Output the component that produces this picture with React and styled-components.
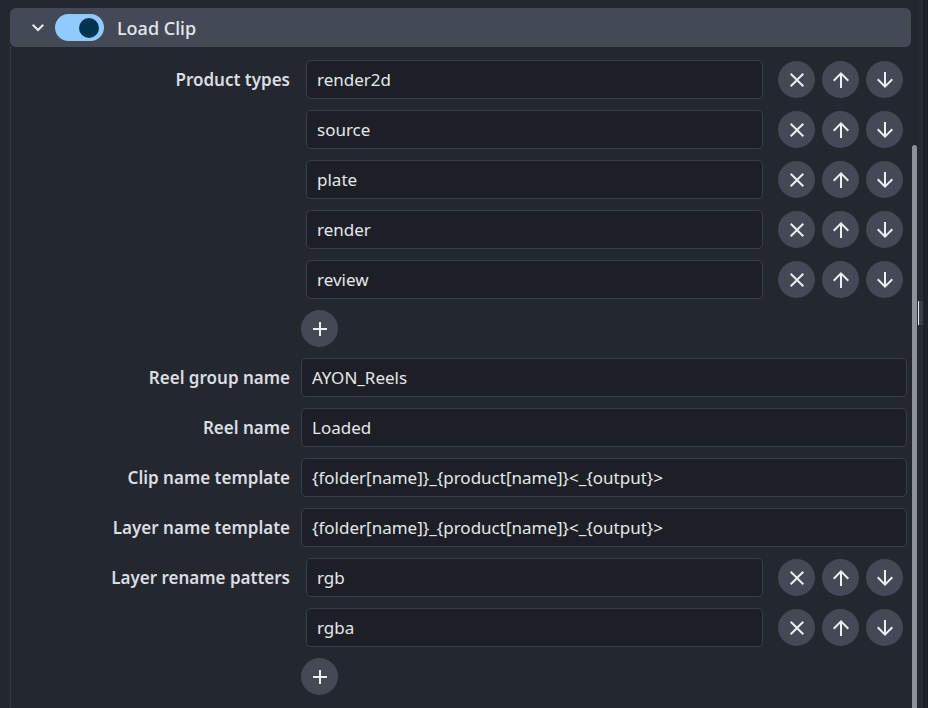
import React from "react";
import styled, { createGlobalStyle } from "styled-components";

const GlobalStyle = createGlobalStyle`
  html, body { margin: 0; padding: 0; background: #23272e; }
  body { font-family: "Noto Sans", "Open Sans", sans-serif; overflow: hidden; }
  * { box-sizing: border-box; }
`;

const Page = styled.div`
  display: flex;
  height: 708px;
  width: 928px;
  background: #23272e;
  overflow: hidden;
`;

const ScrollArea = styled.div`
  flex: 1;
  min-width: 0;
  padding: 8px 0 0 10px;
  overflow: hidden;
`;

const ScrollTrack = styled.div`
  width: 7px;
  display: flex;
  flex-direction: column;
  padding: 145px 1px 0 1px;
  background: #22262d;
`;

const ScrollThumb = styled.div`
  flex: 1;
  background: #8c919a;
  border-radius: 3px 3px 0 0;
`;

const SideStrip = styled.div`
  width: 10px;
  display: flex;
  flex-direction: column;
  padding-top: 301px;
  background: linear-gradient(to right, #262a31 0 5px, #1e2128 5px 10px);
`;

const SplitHandle = styled.div`
  width: 5px;
  height: 24px;
  background: #3a3e45;
  border-left: 1.5px solid #e8eaee;
`;

const Header = styled.div`
  display: flex;
  align-items: center;
  height: 39px;
  background: #434a56;
  border-radius: 6px;
  padding-left: 16px;
  gap: 5px;
`;

const Chevron = styled.svg`
  width: 24px;
  height: 24px;
  fill: #e6e8ec;
`;

const Toggle = styled.div`
  width: 49px;
  height: 27px;
  border-radius: 14px;
  background: #8fcbff;
  display: flex;
  align-items: center;
  justify-content: flex-end;
  padding-right: 5px;
`;

const Knob = styled.div`
  width: 20px;
  height: 20px;
  border-radius: 50%;
  background: #00344f;
`;

const Title = styled.span`
  margin-left: 8px;
  font-size: 18px;
  font-weight: 500;
  color: #e4e7eb;
`;

const Body = styled.div`
  border-left: 1px dotted #444a53;
  padding: 13px 4px 40px 0;
`;

const Form = styled.div`
  display: grid;
  grid-template-columns: 279px 1fr;
  column-gap: 11px;
  row-gap: 11px;
  align-items: start;
`;

const Label = styled.div`
  height: 39px;
  line-height: 39px;
  text-align: right;
  font-size: 17px;
  font-weight: 600;
  color: #dadde2;
  white-space: nowrap;
`;

const Input = styled.div`
  height: 39px;
  flex: 1;
  min-width: 0;
  display: flex;
  align-items: center;
  padding: 0 10px;
  background: #1c1f25;
  border: 1px solid #3a3f47;
  border-radius: 5px;
  font-size: 17px;
  color: #e4e7eb;
  white-space: nowrap;
`;

const List = styled.div`
  display: flex;
  flex-direction: column;
  gap: 11px;
  align-items: flex-start;
`;

const ListItem = styled.div`
  display: flex;
  align-items: center;
  align-self: stretch;
  padding: 0 4px 0 5px;
`;

const Buttons = styled.div`
  display: flex;
  gap: 7px;
  margin-left: 15px;
`;

const RoundButton = styled.button`
  width: 37px;
  height: 37px;
  border-radius: 50%;
  border: none;
  padding: 0;
  background: #434a56;
  display: flex;
  align-items: center;
  justify-content: center;
  cursor: pointer;
  svg {
    width: 24px;
    height: 24px;
    fill: #eceef1;
  }
`;

const ICONS = {
  close:
    "m256-200-56-56 224-224-224-224 56-56 224 224 224-224 56 56-224 224 224 224-56 56-224-224-224 224Z",
  up: "M440-160v-487L216-423l-56-57 320-320 320 320-56 57-224-224v487h-80Z",
  down: "M440-800v487L216-537l-56 57 320 320 320-320-56-57-224 224v-487h-80Z",
  add: "M440-440H200v-80h240v-240h80v240h240v80H520v240h-80v-240Z",
};

const Icon = ({ name }) => (
  <svg viewBox="0 -960 960 960">
    <path d={ICONS[name]} />
  </svg>
);

const ListField = ({ items }) => (
  <List>
    {items.map((it) => (
      <ListItem key={it}>
        <Input>{it}</Input>
        <Buttons>
          <RoundButton><Icon name="close" /></RoundButton>
          <RoundButton><Icon name="up" /></RoundButton>
          <RoundButton><Icon name="down" /></RoundButton>
        </Buttons>
      </ListItem>
    ))}
    <RoundButton><Icon name="add" /></RoundButton>
  </List>
);

export default function App() {
  return (
    <Page>
      <GlobalStyle />
      <ScrollArea>
        <Header>
          <Chevron viewBox="0 -960 960 960">
            <path d="M480-345 240-585l56-56 184 184 184-184 56 56-240 240Z" />
          </Chevron>
          <Toggle><Knob /></Toggle>
          <Title>Load Clip</Title>
        </Header>
        <Body>
          <Form>
            <Label>Product types</Label>
            <ListField items={["render2d", "source", "plate", "render", "review"]} />
            <Label>Reel group name</Label>
            <Input>AYON_Reels</Input>
            <Label>Reel name</Label>
            <Input>Loaded</Input>
            <Label>Clip name template</Label>
            <Input>{"{folder[name]}_{product[name]}<_{output}>"}</Input>
            <Label>Layer name template</Label>
            <Input>{"{folder[name]}_{product[name]}<_{output}>"}</Input>
            <Label>Layer rename patters</Label>
            <ListField items={["rgb", "rgba"]} />
          </Form>
        </Body>
      </ScrollArea>
      <ScrollTrack><ScrollThumb /></ScrollTrack>
      <SideStrip><SplitHandle /></SideStrip>
    </Page>
  );
}
